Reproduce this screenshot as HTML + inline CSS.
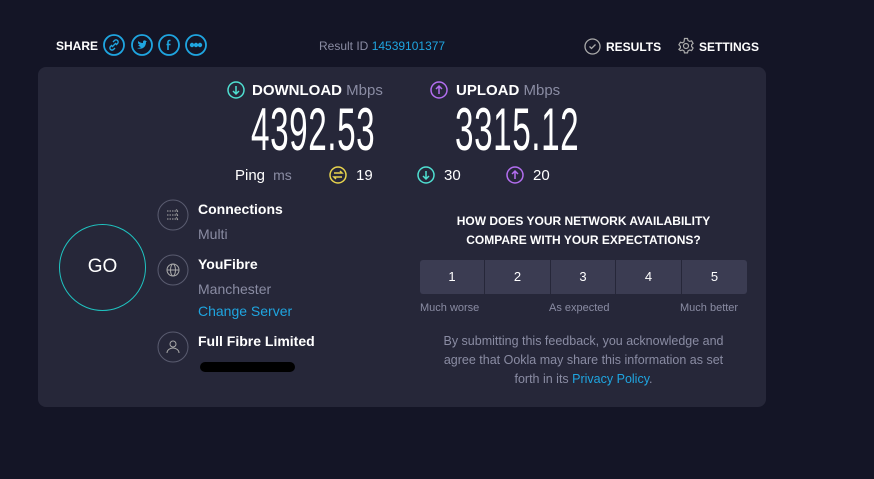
<!DOCTYPE html>
<html><head><meta charset="utf-8"><style>
*{margin:0;padding:0;box-sizing:border-box}
body{width:874px;height:479px;background:#141526;font-family:"Liberation Sans",sans-serif;color:#fff;position:relative;overflow:hidden}
.a{position:absolute;white-space:nowrap}
.card{position:absolute;left:38px;top:67px;width:728px;height:340px;background:#262739;border-radius:8px}
svg{position:absolute}
.big{position:absolute;font-size:60px;color:#fff;transform:scaleX(0.555);transform-origin:left top;letter-spacing:1px}
.gray{color:#8a8ca3}
.btn{position:absolute;top:260px;height:34px;background:#3b3c52;color:#fff;font-size:13px;text-align:center;line-height:34px}
</style></head><body>
<div class="a" style="left:56px;top:39px;font-size:12px;font-weight:bold">SHARE</div>
<svg style="left:103px;top:34px" width="22" height="22" viewBox="0 0 22 22" fill="none" stroke="#1fa5e0" stroke-width="1.8"><circle cx="11" cy="11" r="10"/><path d="M9 13l4-4M10 8l1.5-1.5a2 2 0 013 3L13 11M12 14l-1.5 1.5a2 2 0 01-3-3L9 11" stroke-width="1.4"/></svg>
<svg style="left:131px;top:34px" width="22" height="22" viewBox="0 0 22 22" fill="none" stroke="#1fa5e0" stroke-width="1.8"><circle cx="11" cy="11" r="10"/><path d="M6 14c4 2 9 0 9-6l1-1-1 0c-1-1-3-1-3 1v1c-2 0-4-1-5-2 0 2 0 3 2 4-1 0-1 0-2 0 1 1 2 2 3 2-1 1-3 1-4 1z" fill="#1fa5e0" stroke="none"/></svg>
<svg style="left:158px;top:34px" width="22" height="22" viewBox="0 0 22 22" fill="none" stroke="#1fa5e0" stroke-width="1.8"><circle cx="11" cy="11" r="10"/><path d="M12.5 6.5h-1a1.5 1.5 0 00-1.5 1.5v8M8.5 10.5h4" stroke-width="1.6"/></svg>
<svg style="left:185px;top:34px" width="22" height="22" viewBox="0 0 22 22" fill="none" stroke="#1fa5e0" stroke-width="1.8"><circle cx="11" cy="11" r="10"/><circle cx="7" cy="11" r="1.3" fill="#1fa5e0"/><circle cx="11" cy="11" r="1.3" fill="#1fa5e0"/><circle cx="15" cy="11" r="1.3" fill="#1fa5e0"/></svg>
<div class="a" style="left:319px;top:39px;font-size:12px;color:#8a8ca3">Result ID <span style="color:#1fa5e0">14539101377</span></div>
<svg style="left:584px;top:38px" width="17" height="17" viewBox="0 0 17 17" fill="none" stroke="#aaa" stroke-width="1.3"><circle cx="8.5" cy="8.5" r="7.5"/><path d="M5.5 8.5l2 2 4-4"/></svg>
<div class="a" style="left:606px;top:40px;font-size:12px;font-weight:bold">RESULTS</div>
<svg style="left:677px;top:37px" width="18" height="18" viewBox="0 0 18 18" fill="none" stroke="#aaa" stroke-width="1.2"><path d="M7.5 1.5h3l.5 2 1.6.9 2-.6 1.5 2.6-1.5 1.4v1.8l1.5 1.4-1.5 2.6-2-.6-1.6.9-.5 2h-3l-.5-2-1.6-.9-2 .6L1.9 12.4 3.4 11V9.2L1.9 7.8 3.4 5.2l2 .6L7 4.9z"/><circle cx="9" cy="9" r="2.5"/></svg>
<div class="a" style="left:699px;top:40px;font-size:12px;font-weight:bold">SETTINGS</div>
<div class="card"></div>
<svg style="left:227px;top:81px" width="18" height="18" viewBox="0 0 18 18" fill="none" stroke="#4fe0d2" stroke-width="1.5"><circle cx="9" cy="9" r="8"/><path d="M9 5v8M6 10l3 3 3-3"/></svg>
<div class="a" style="left:252px;top:82px;font-size:15px;font-weight:bold">DOWNLOAD <span class="gray" style="font-weight:normal">Mbps</span></div>
<svg style="left:430px;top:81px" width="18" height="18" viewBox="0 0 18 18" fill="none" stroke="#b36ef0" stroke-width="1.5"><circle cx="9" cy="9" r="8"/><path d="M9 13V5M6 8l3-3 3 3"/></svg>
<div class="a" style="left:456px;top:82px;font-size:15px;font-weight:bold">UPLOAD <span class="gray" style="font-weight:normal">Mbps</span></div>
<div class="big" style="left:251px;top:95px">4392.53</div>
<div class="big" style="left:455px;top:95px">3315.12</div>
<div class="a" style="left:235px;top:167px;font-size:15px">Ping <span class="gray" style="font-size:14px">&nbsp;ms</span></div>
<svg style="left:329px;top:166px" width="18" height="18" viewBox="0 0 18 18" fill="none" stroke="#e8d44d" stroke-width="1.5"><circle cx="9" cy="9" r="8"/><path d="M5 7h8l-2-2M13 11H5l2 2"/></svg>
<div class="a" style="left:356px;top:167px;font-size:15px">19</div>
<svg style="left:417px;top:166px" width="18" height="18" viewBox="0 0 18 18" fill="none" stroke="#4fe0d2" stroke-width="1.5"><circle cx="9" cy="9" r="8"/><path d="M9 5v8M6 10l3 3 3-3"/></svg>
<div class="a" style="left:444px;top:167px;font-size:15px">30</div>
<svg style="left:506px;top:166px" width="18" height="18" viewBox="0 0 18 18" fill="none" stroke="#b36ef0" stroke-width="1.5"><circle cx="9" cy="9" r="8"/><path d="M9 13V5M6 8l3-3 3 3"/></svg>
<div class="a" style="left:533px;top:167px;font-size:15px">20</div>
<div class="a" style="left:59px;top:224px;width:87px;height:87px;border:1.5px solid #1fc3c0;border-radius:50%;font-size:19px;text-align:center;line-height:84px">GO</div>
<svg style="left:157px;top:199px" width="32" height="32" viewBox="0 0 32 32" fill="none" stroke="#5a5c70" stroke-width="1"><circle cx="16" cy="16" r="15"/><path d="M10 12h11M10 16h11M10 20h11M19 10.5l2 1.5-2 1.5M19 14.5l2 1.5-2 1.5M19 18.5l2 1.5-2 1.5" stroke="#aaa" stroke-dasharray="1.5 1"/></svg>
<div class="a" style="left:198px;top:201px;font-size:14px;font-weight:bold">Connections</div>
<div class="a gray" style="left:198px;top:226px;font-size:14px">Multi</div>
<svg style="left:157px;top:254px" width="32" height="32" viewBox="0 0 32 32" fill="none" stroke="#5a5c70" stroke-width="1"><circle cx="16" cy="16" r="15"/><g stroke="#aaa"><circle cx="16" cy="16" r="6"/><ellipse cx="16" cy="16" rx="2.5" ry="6"/><path d="M10 16h12"/></g></svg>
<div class="a" style="left:198px;top:256px;font-size:14px;font-weight:bold">YouFibre</div>
<div class="a gray" style="left:198px;top:281px;font-size:14px">Manchester</div>
<div class="a" style="left:198px;top:303px;font-size:14px;color:#1fa5e0">Change Server</div>
<svg style="left:157px;top:331px" width="32" height="32" viewBox="0 0 32 32" fill="none" stroke="#5a5c70" stroke-width="1"><circle cx="16" cy="16" r="15"/><g stroke="#aaa"><circle cx="16" cy="13" r="3"/><path d="M10 22c0-3 3-5 6-5s6 2 6 5"/></g></svg>
<div class="a" style="left:198px;top:333px;font-size:14px;font-weight:bold">Full Fibre Limited</div>
<div class="a" style="left:200px;top:362px;width:95px;height:10px;background:#000;border-radius:5px"></div>
<div class="a" style="left:420px;top:212px;width:327px;text-align:center;font-size:12px;font-weight:bold;line-height:19px">HOW DOES YOUR NETWORK AVAILABILITY<br>COMPARE WITH YOUR EXPECTATIONS?</div>
<div class="btn" style="left:420px;width:64px;border-radius:3px 0 0 3px">1</div>
<div class="btn" style="left:485px;width:65px">2</div>
<div class="btn" style="left:551px;width:64px">3</div>
<div class="btn" style="left:616px;width:65px">4</div>
<div class="btn" style="left:682px;width:65px;border-radius:0 3px 3px 0">5</div>
<div class="a gray" style="left:420px;top:302px;font-size:11px">Much worse</div>
<div class="a gray" style="left:549px;top:302px;font-size:11px">As expected</div>
<div class="a gray" style="left:680px;top:302px;font-size:11px">Much better</div>
<div class="a gray" style="left:420px;top:332px;width:327px;text-align:center;font-size:12.5px;line-height:19px">By submitting this feedback, you acknowledge and<br>agree that Ookla may share this information as set<br>forth in its <span style="color:#1fa5e0">Privacy Policy</span>.</div>
</body></html>
